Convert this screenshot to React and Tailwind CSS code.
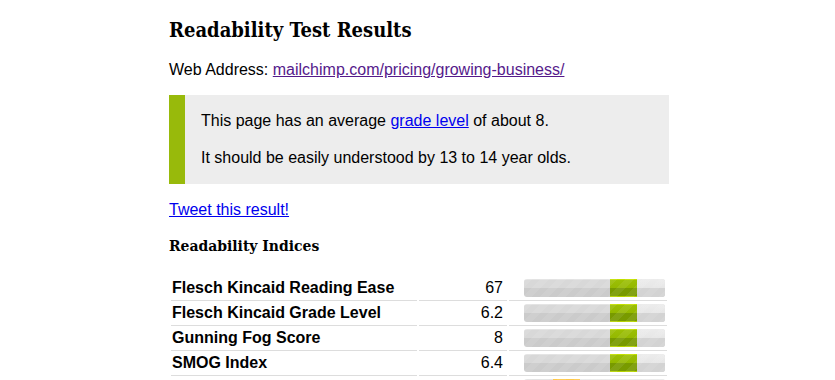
import React from 'react';

const indices = [
  { name: 'Flesch Kincaid Reading Ease', value: '67', from: 86, to: 113, color: 'green' },
  { name: 'Flesch Kincaid Grade Level', value: '6.2', from: 86, to: 113, color: 'green' },
  { name: 'Gunning Fog Score', value: '8', from: 86, to: 113, color: 'green' },
  { name: 'SMOG Index', value: '6.4', from: 86, to: 113, color: 'green' },
  { name: 'Coleman Liau Index', value: '10.9', from: 29, to: 56, color: 'orange' },
];

const slab = { fontFamily: '"DejaVu Serif Condensed", "DejaVu Serif", serif' };

function Bar({ from, to, color }) {
  const seg =
    color === 'green'
      ? 'bg-[linear-gradient(to_bottom,#c2df00_0px,#c2df00_1px,#9cbf06_1px,#94b800_50%,#789a00_50%,#789a00_calc(100%-1px),#b5d200_calc(100%-1px))]'
      : 'bg-[linear-gradient(to_bottom,#ffc94a_0px,#ffc94a_1px,#f6b028_1px,#f3a820_50%,#e2921a_50%)]';
  return (
    <div className="relative h-[18px] w-[141px] overflow-hidden rounded-[3px] bg-[linear-gradient(to_bottom,#e3e3e3_0px,#e3e3e3_1px,#d8d8d8_1px,#d8d8d8_50%,#cbcbcb_50%)]">
      {/* lighter tail after the marker */}
      <div
        className="absolute top-0 bottom-0 right-0 bg-[linear-gradient(to_bottom,#ececec_0px,#e6e6e6_50%,#d3d3d3_50%)]"
        style={{ left: to }}
      />
      <div className={`absolute top-0 bottom-0 ${seg}`} style={{ left: from, width: to - from }} />
      {/* diagonal sheen */}
      <div className="absolute inset-0 bg-[repeating-linear-gradient(135deg,rgba(255,255,255,0.08)_0px,rgba(255,255,255,0.08)_6px,transparent_6px,transparent_12px)]" />
    </div>
  );
}

export default function App() {
  return (
    <div className="min-h-screen bg-white text-black" style={{ fontFamily: '"Liberation Sans", Arial, sans-serif' }}>
      <div className="ml-[169px] w-[500px] pt-[16px]">
        <h1 className="text-[20px] font-bold leading-[28px]" style={slab}>
          Readability Test Results
        </h1>

        <p className="mt-[16px] text-[16px] leading-[20px]">
          Web Address:{' '}
          <a href="#" className="text-[#551a8b] underline">
            mailchimp.com/pricing/growing-business/
          </a>
        </p>

        <div className="mt-[15px] flex bg-[#ededed]">
          <div className="w-[16px] shrink-0 bg-[#98ba0b]" />
          <div className="pl-[16px] pt-[16px] pb-[15px] text-[16px] leading-[20.8px]">
            <p>
              This page has an average{' '}
              <a href="#" className="text-[#0000ee] underline">
                grade level
              </a>{' '}
              of about 8.
            </p>
            <p className="mt-[16px]">It should be easily understood by 13 to 14 year olds.</p>
          </div>
        </div>

        <p className="mt-[16px] text-[16px] leading-[20px]">
          <a href="#" className="text-[#0000ee] underline">
            Tweet this result!
          </a>
        </p>

        <h2 className="mt-[15px] text-[15.5px] font-bold leading-[22px]" style={slab}>
          Readability Indices
        </h2>

        <table className="mt-[19px] w-[500px] border-separate border-spacing-x-[2px] border-spacing-y-0 text-[16px]">
          <tbody>
            {indices.map((row) => (
              <tr key={row.name}>
                <td className="h-[25px] w-[246px] border-b border-[#dddddd] pl-[1px] align-middle font-bold">
                  {row.name}
                </td>
                <td className="h-[25px] w-[88px] border-b border-[#dddddd] pr-[4px] text-right align-middle">
                  {row.value}
                </td>
                <td className="h-[25px] border-b border-[#dddddd] pl-[15px] align-middle">
                  <Bar from={row.from} to={row.to} color={row.color} />
                </td>
              </tr>
            ))}
          </tbody>
        </table>
      </div>
    </div>
  );
}
